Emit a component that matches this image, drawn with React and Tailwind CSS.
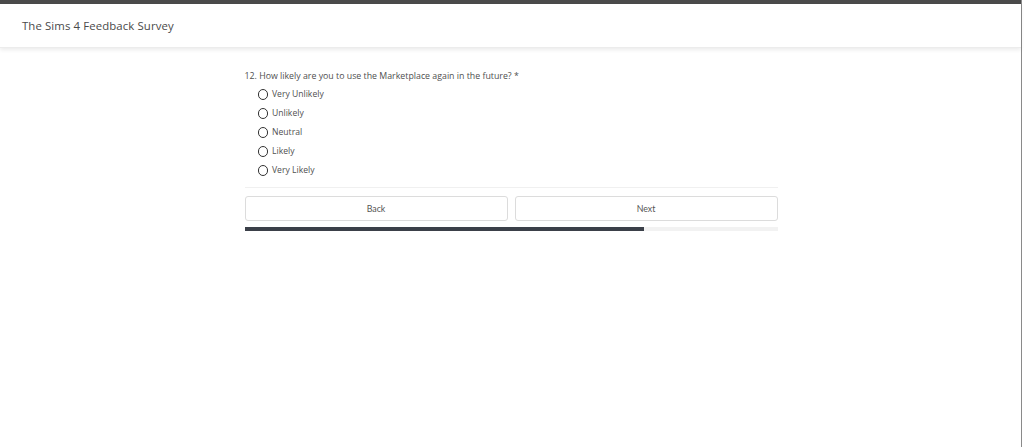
import { useState } from 'react';

const OPTIONS = ['Very Unlikely', 'Unlikely', 'Neutral', 'Likely', 'Very Likely'];

const App = () => {
  const [picked, setPicked] = useState(null);
  const progress = 75;

  return (
    <div className="w-[1024px] h-[447px] bg-white flex">
      <div className="w-[1022px] h-full border-r border-[#8a8a8a] flex flex-col">
        {/* top bar */}
        <div className="h-[4px] bg-[#4a4a4a]" />

        {/* header */}
        <div className="h-[44px] bg-white shadow-[0_2px_4px_rgba(0,0,0,0.08)] border-b border-[#ececec] flex items-center px-[22px]">
          <span className="text-[11.4px] text-[#4a4a4a] tracking-[0.1px]" style={{ fontFamily: '"Open Sans", sans-serif' }}>
            The Sims 4 Feedback Survey
          </span>
        </div>

        {/* question */}
        <div className="w-[534px] mx-auto pt-[22px] pl-[1px]" style={{ fontFamily: '"Open Sans", sans-serif' }}>
          <div className="text-[8.8px] text-[#4f4f4f] leading-[12px]">
            12. How likely are you to use the Marketplace again in the future? *
          </div>
          <div className="flex flex-col pl-[13px] pt-[3px]">
            {OPTIONS.map((opt, idx) => (
              <label key={idx} className="h-[19px] flex items-center gap-[4px] cursor-pointer" onClick={() => setPicked(idx)}>
                <span className="w-[10.5px] h-[10.5px] rounded-full border-[1.2px] border-[#333] flex items-center justify-center">
                  {picked === idx && <span className="w-[4px] h-[4px] rounded-full bg-[#333]" />}
                </span>
                <span className="text-[8.6px] text-[#4f4f4f]">{opt}</span>
              </label>
            ))}
          </div>

          <div className="mt-[7px] h-px bg-[#f0f0f0]" />

          {/* nav buttons */}
          <div className="mt-[8px] flex gap-[7px]" style={{ fontFamily: 'Lato, sans-serif' }}>
            <button className="flex-1 h-[25px] border border-[#dcdcdc] rounded-[3px] bg-white text-[8.8px] text-[#555]">Back</button>
            <button className="flex-1 h-[25px] border border-[#dcdcdc] rounded-[3px] bg-white text-[8.8px] text-[#555]">Next</button>
          </div>

          {/* progress */}
          <div className="mt-[6px] h-[4px] bg-[#f2f2f2]">
            <div className="h-full bg-[#3b4049]" style={{ width: `${progress}%` }} />
          </div>
        </div>
      </div>
    </div>
  );
};

export default App;
